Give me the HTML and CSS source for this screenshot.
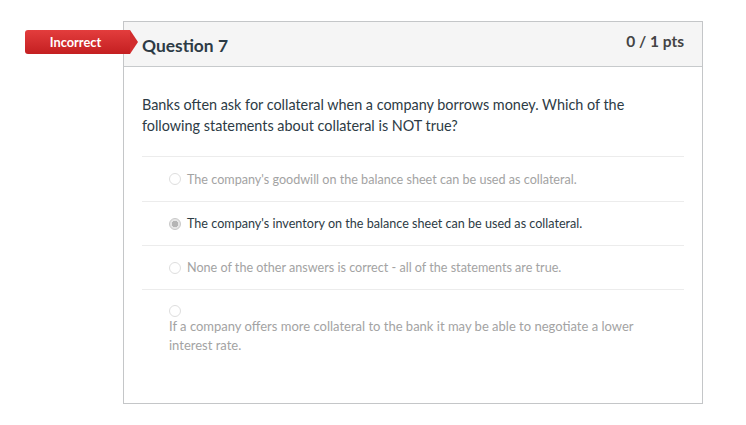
FILE: index.html
```html
<!DOCTYPE html>
<html>
<head>
<meta charset="utf-8">
<link rel="stylesheet" href="styles.css">
</head>
<body>
<div class="page">
  <div class="card">
    <div class="badge">Incorrect</div>
    <div class="header">
      <span class="title">Question 7</span>
      <span class="pts">0 / 1 pts</span>
    </div>
    <div class="body">
      <p class="question">Banks often ask for collateral when a company borrows money. Which of the following statements about collateral is NOT true?</p>
      <div class="answers">
        <div class="answer"><span class="radio"></span><span class="atext">The company's goodwill on the balance sheet can be used as collateral.</span></div>
        <div class="answer selected"><span class="radio checked"></span><span class="atext">The company's inventory on the balance sheet can be used as collateral.</span></div>
        <div class="answer"><span class="radio"></span><span class="atext">None of the other answers is correct - all of the statements are true.</span></div>
        <div class="answer block"><span class="radio"></span><span class="atext">If a company offers more collateral to the bank it may be able to negotiate a lower interest rate.</span></div>
      </div>
    </div>
  </div>
</div>
</body>
</html>
```
FILE: styles.css
```css
html, body {
  margin: 0;
  padding: 0;
  background: #fff;
  font-family: Lato, "Open Sans", sans-serif;
  color: #2d3b45;
}
.page {
  padding: 21px 0 0 123px;
}
.card {
  position: relative;
  width: 578px;
  height: 381px;
  border: 1px solid #c4c6c8;
  box-sizing: content-box;
}
.badge {
  position: absolute;
  left: -99px;
  top: 8px;
  width: 105px;
  height: 24px;
  line-height: 24px;
  color: #fff;
  font-size: 12.8px;
  font-weight: 700;
  text-align: center;
  padding-right: 4px;
  box-sizing: border-box;
  background: linear-gradient(#e33d3d, #c41f21);
  border-radius: 3px 0 0 3px;
}
.badge::after {
  content: "";
  position: absolute;
  right: -8px;
  top: 0;
  border-left: 8px solid #d22d2e;
  border-top: 12px solid transparent;
  border-bottom: 12px solid transparent;
}
.header {
  height: 44px;
  background: #f5f5f5;
  border-bottom: 1px solid #c7cacc;
  display: flex;
  justify-content: space-between;
  align-items: center;
  padding: 0 18px;
}
.title {
  font-size: 17.4px;
  font-weight: 700;
  color: #2d3b45;
  margin-top: 3px;
}
.pts {
  font-size: 15.5px;
  font-weight: 700;
  color: #444;
  margin-top: -7px;
}
.body {
  padding: 0 18px;
}
.question {
  margin: 0;
  padding: 27px 0 20px;
  font-size: 14.4px;
  line-height: 21px;
  color: #2d3b45;
}
.answer {
  border-top: 1px solid #ececec;
  height: 44px;
  display: flex;
  align-items: center;
  padding-left: 27px;
  font-size: 12.6px;
  color: #a3a3a3;
}
.answer + .answer {
  height: 43px;
}
.answer.selected {
  color: #2d3b45;
}
.radio {
  width: 10px;
  height: 10px;
  border: 1px solid #dedede;
  border-radius: 50%;
  background: #fff;
  margin-right: 6px;
  flex-shrink: 0;
}
.radio.checked {
  border-color: #c8c8c8;
  background: radial-gradient(circle, #b5b5b5 0 3px, #e6e6e6 3.5px);
}
.answer.block {
  display: block;
  height: auto;
  padding-top: 15px;
  line-height: 19px;
  font-size: 13px;
}
.answer.block .radio {
  display: block;
  margin: 0;
}
.answer.block .atext {
  display: block;
  max-width: 480px;
}
```
